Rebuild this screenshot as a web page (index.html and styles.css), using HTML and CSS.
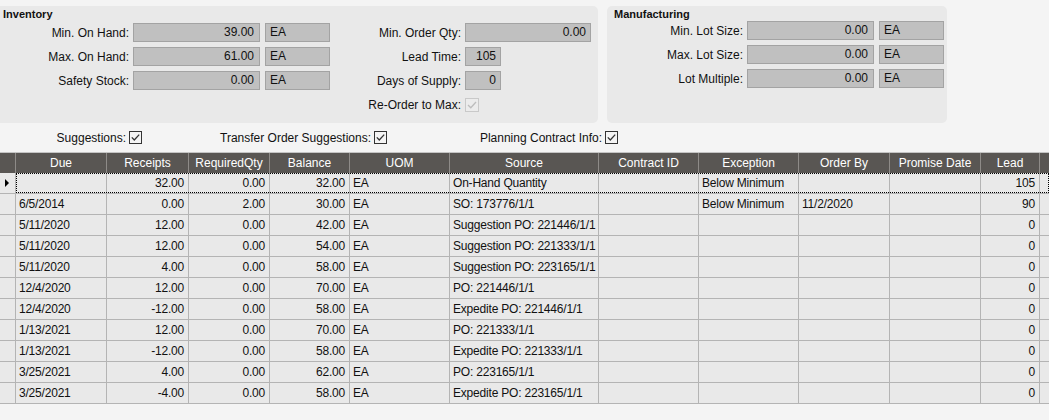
FILE: index.html
```html
<!DOCTYPE html>
<html>
<head>
<meta charset="utf-8">
<link rel="stylesheet" href="styles.css">
</head>
<body>
<div class="top">
  <div class="panel inv">
    <div class="ptitle">Inventory</div>
    <div class="pbody">
      <div class="col colA">
        <div class="frow"><span class="lbl lblA">Min. On Hand:</span><span class="fld num w127">39.00</span><span class="fld unit">EA</span></div>
        <div class="frow"><span class="lbl lblA">Max. On Hand:</span><span class="fld num w127">61.00</span><span class="fld unit">EA</span></div>
        <div class="frow"><span class="lbl lblA">Safety Stock:</span><span class="fld num w127">0.00</span><span class="fld unit">EA</span></div>
      </div>
      <div class="col colB">
        <div class="frow"><span class="lbl lblB">Min. Order Qty:</span><span class="fld num w126">0.00</span></div>
        <div class="frow"><span class="lbl lblB">Lead Time:</span><span class="fld num w36">105</span></div>
        <div class="frow"><span class="lbl lblB">Days of Supply:</span><span class="fld num w36">0</span></div>
        <div class="frow"><span class="lbl lblB">Re-Order to Max:</span><span class="chk dis"><svg width="14" height="14" viewBox="0 0 14 14"><rect x="0.5" y="0.5" width="13" height="13" fill="#ececec" stroke="#c9c9c9"/><polyline points="3,7 5.8,9.8 11,4" fill="none" stroke="#bdbdbd" stroke-width="1.3"/></svg></span></div>
      </div>
    </div>
  </div>
  <div class="panel mfg">
    <div class="ptitle mt">Manufacturing</div>
    <div class="col colM">
      <div class="frow"><span class="lbl lblM">Min. Lot Size:</span><span class="fld num w127">0.00</span><span class="fld unit">EA</span></div>
      <div class="frow"><span class="lbl lblM">Max. Lot Size:</span><span class="fld num w127">0.00</span><span class="fld unit">EA</span></div>
      <div class="frow"><span class="lbl lblM">Lot Multiple:</span><span class="fld num w127">0.00</span><span class="fld unit">EA</span></div>
    </div>
  </div>
</div>
<div class="opts">
  <div class="opt o1"><span>Suggestions:</span><span class="chk"><svg width="13" height="13" viewBox="0 0 13 13"><rect x="0.5" y="0.5" width="12" height="12" fill="#f4f4f4" stroke="#333"/><polyline points="2.8,6.4 5.3,9 10.2,3.6" fill="none" stroke="#333" stroke-width="1.3"/></svg></span></div>
  <div class="opt o2"><span>Transfer Order Suggestions:</span><span class="chk"><svg width="13" height="13" viewBox="0 0 13 13"><rect x="0.5" y="0.5" width="12" height="12" fill="#f4f4f4" stroke="#333"/><polyline points="2.8,6.4 5.3,9 10.2,3.6" fill="none" stroke="#333" stroke-width="1.3"/></svg></span></div>
  <div class="opt o3"><span>Planning Contract Info:</span><span class="chk"><svg width="13" height="13" viewBox="0 0 13 13"><rect x="0.5" y="0.5" width="12" height="12" fill="#f4f4f4" stroke="#333"/><polyline points="2.8,6.4 5.3,9 10.2,3.6" fill="none" stroke="#333" stroke-width="1.3"/></svg></span></div>
</div>
<div class="grid">
  <div class="row head">
    <div class="rh"></div>
    <div class="cells">
      <div class="c">Due</div><div class="c">Receipts</div><div class="c">RequiredQty</div><div class="c">Balance</div><div class="c">UOM</div><div class="c">Source</div><div class="c">Contract ID</div><div class="c">Exception</div><div class="c">Order By</div><div class="c">Promise Date</div><div class="c">Lead</div><div class="c last"></div>
    </div>
  </div>
  <div class="row cur">
    <div class="rh"><span class="tri"></span></div>
    <div class="cells">
      <div class="c"></div><div class="c r">32.00</div><div class="c r">0.00</div><div class="c r">32.00</div><div class="c">EA</div><div class="c">On-Hand Quantity</div><div class="c"></div><div class="c">Below Minimum</div><div class="c"></div><div class="c"></div><div class="c r">105</div><div class="c last"></div>
    </div>
  </div>
  <div class="row">
    <div class="rh"></div>
    <div class="cells">
      <div class="c">6/5/2014</div><div class="c r">0.00</div><div class="c r">2.00</div><div class="c r">30.00</div><div class="c">EA</div><div class="c">SO: 173776/1/1</div><div class="c"></div><div class="c">Below Minimum</div><div class="c">11/2/2020</div><div class="c"></div><div class="c r">90</div><div class="c last"></div>
    </div>
  </div>
  <div class="row">
    <div class="rh"></div>
    <div class="cells">
      <div class="c">5/11/2020</div><div class="c r">12.00</div><div class="c r">0.00</div><div class="c r">42.00</div><div class="c">EA</div><div class="c">Suggestion PO: 221446/1/1</div><div class="c"></div><div class="c"></div><div class="c"></div><div class="c"></div><div class="c r">0</div><div class="c last"></div>
    </div>
  </div>
  <div class="row">
    <div class="rh"></div>
    <div class="cells">
      <div class="c">5/11/2020</div><div class="c r">12.00</div><div class="c r">0.00</div><div class="c r">54.00</div><div class="c">EA</div><div class="c">Suggestion PO: 221333/1/1</div><div class="c"></div><div class="c"></div><div class="c"></div><div class="c"></div><div class="c r">0</div><div class="c last"></div>
    </div>
  </div>
  <div class="row">
    <div class="rh"></div>
    <div class="cells">
      <div class="c">5/11/2020</div><div class="c r">4.00</div><div class="c r">0.00</div><div class="c r">58.00</div><div class="c">EA</div><div class="c">Suggestion PO: 223165/1/1</div><div class="c"></div><div class="c"></div><div class="c"></div><div class="c"></div><div class="c r">0</div><div class="c last"></div>
    </div>
  </div>
  <div class="row">
    <div class="rh"></div>
    <div class="cells">
      <div class="c">12/4/2020</div><div class="c r">12.00</div><div class="c r">0.00</div><div class="c r">70.00</div><div class="c">EA</div><div class="c">PO: 221446/1/1</div><div class="c"></div><div class="c"></div><div class="c"></div><div class="c"></div><div class="c r">0</div><div class="c last"></div>
    </div>
  </div>
  <div class="row">
    <div class="rh"></div>
    <div class="cells">
      <div class="c">12/4/2020</div><div class="c r">-12.00</div><div class="c r">0.00</div><div class="c r">58.00</div><div class="c">EA</div><div class="c">Expedite PO: 221446/1/1</div><div class="c"></div><div class="c"></div><div class="c"></div><div class="c"></div><div class="c r">0</div><div class="c last"></div>
    </div>
  </div>
  <div class="row">
    <div class="rh"></div>
    <div class="cells">
      <div class="c">1/13/2021</div><div class="c r">12.00</div><div class="c r">0.00</div><div class="c r">70.00</div><div class="c">EA</div><div class="c">PO: 221333/1/1</div><div class="c"></div><div class="c"></div><div class="c"></div><div class="c"></div><div class="c r">0</div><div class="c last"></div>
    </div>
  </div>
  <div class="row">
    <div class="rh"></div>
    <div class="cells">
      <div class="c">1/13/2021</div><div class="c r">-12.00</div><div class="c r">0.00</div><div class="c r">58.00</div><div class="c">EA</div><div class="c">Expedite PO: 221333/1/1</div><div class="c"></div><div class="c"></div><div class="c"></div><div class="c"></div><div class="c r">0</div><div class="c last"></div>
    </div>
  </div>
  <div class="row">
    <div class="rh"></div>
    <div class="cells">
      <div class="c">3/25/2021</div><div class="c r">4.00</div><div class="c r">0.00</div><div class="c r">62.00</div><div class="c">EA</div><div class="c">PO: 223165/1/1</div><div class="c"></div><div class="c"></div><div class="c"></div><div class="c"></div><div class="c r">0</div><div class="c last"></div>
    </div>
  </div>
  <div class="row">
    <div class="rh"></div>
    <div class="cells">
      <div class="c">3/25/2021</div><div class="c r">-4.00</div><div class="c r">0.00</div><div class="c r">58.00</div><div class="c">EA</div><div class="c">Expedite PO: 223165/1/1</div><div class="c"></div><div class="c"></div><div class="c"></div><div class="c"></div><div class="c r">0</div><div class="c last"></div>
    </div>
  </div>
</div>
</body>
</html>
```
FILE: styles.css
```css
* { box-sizing: border-box; }
html, body { margin: 0; padding: 0; }
body {
  width: 1049px;
  height: 420px;
  overflow: hidden;
  background: #f4f4f4;
  font-family: "Liberation Sans", Arial, sans-serif;
  font-size: 12px;
  color: #111;
}
.top {
  display: flex;
  gap: 9px;
  padding-top: 6px;
  height: 123px;
}
.panel {
  background: #e9e9e9;
  border-radius: 0 5px 5px 0;
  height: 117px;
}
.inv { width: 598px; }
.mfg { width: 340px; border-radius: 5px; }
.ptitle {
  font-weight: bold;
  font-size: 11px;
  line-height: 13px;
  padding: 2px 0 0 3px;
  height: 17px;
}
.ptitle.mt { padding-left: 7px; height: 15px; }
.pbody { display: flex; }
.col { display: flex; flex-direction: column; gap: 5px; }
.frow { display: flex; align-items: center; height: 19px; }
.lbl { text-align: right; padding-right: 4px; white-space: nowrap; }
.lblA { width: 133px; }
.lblB { width: 135px; }
.lblM { width: 140px; }
.fld {
  height: 19px;
  line-height: 17px;
  background: #c0c0c0;
  border: 1px solid #a3a3a3;
  white-space: nowrap;
}
.num { text-align: right; padding-right: 5px; }
.w127 { width: 127px; }
.w126 { width: 126px; padding-right: 4px; }
.w36 { width: 36px; padding-right: 4px; }
.unit { width: 65px; margin-left: 5px; padding-left: 4px; }
.chk { display: inline-flex; width: 14px; height: 14px; }
.chk svg { display: block; }
.chk.dis { margin-top: 1px; }

.opts {
  display: flex;
  height: 30px;
  align-items: center;
  border-bottom: 1px solid #c4c4c4;
}
.opt { display: flex; justify-content: flex-end; align-items: center; gap: 3px; }
.o1 { width: 142px; }
.o2 { width: 245px; }
.o3 { width: 231px; }
.opt .chk { width: 13px; height: 13px; }

.grid { width: 1049px; }
.row {
  display: flex;
  height: 21px;
  border-bottom: 1px solid #b4b4b4;
  background: #e9e9e9;
}
.rh {
  width: 16px;
  border-right: 1px solid #b4b4b4;
  display: flex;
  align-items: center;
  padding-left: 5px;
}
.cells {
  flex: 1;
  display: grid;
  grid-template-columns: 91px 82px 81px 80px 100px 149px 100px 100px 91px 91px 59px 1fr;
}
.c {
  border-right: 1px solid #b4b4b4;
  padding: 0 3px;
  line-height: 20px;
  white-space: nowrap;
  overflow: hidden;
  letter-spacing: -0.2px;
}
.c.r { text-align: right; padding-right: 4px; }
.c.last { border-right: none; }
.head {
  height: 20px;
  background: #595653;
  border-bottom: none;
  color: #fff;
}
.head .rh { border-right: 1px solid #8e8b88; }
.head .c { text-align: center; border-right: 1px solid #8e8b88; line-height: 20px; letter-spacing: 0; }
.head .c.last { border-right: none; }
.cur .cells { outline: 1px dotted #000; outline-offset: -1px; }
.tri {
  width: 0; height: 0;
  border-top: 4px solid transparent;
  border-bottom: 4px solid transparent;
  border-left: 4px solid #000;
}
```
